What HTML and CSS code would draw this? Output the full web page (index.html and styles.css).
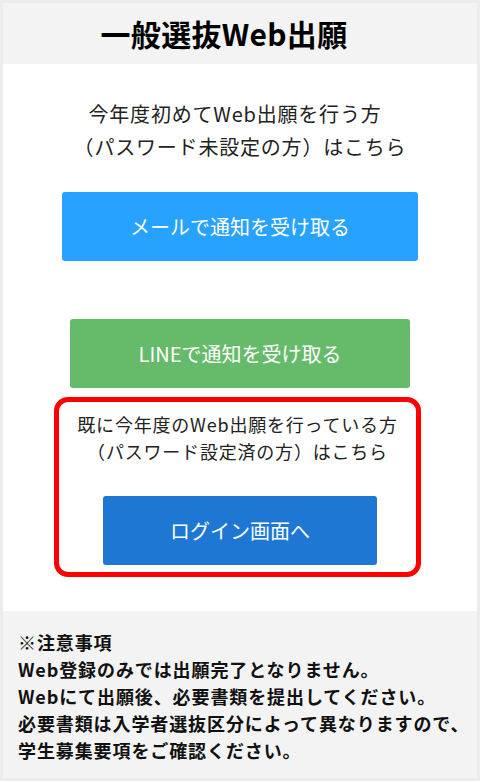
FILE: index.html
```html
<!DOCTYPE html>
<html lang="ja">
<head>
    <meta charset="UTF-8">
    <meta name="viewport" content="width=device-width, initial-scale=1.0">
    <title>一般選抜Web出願</title>
    <link rel="stylesheet" href="styles.css">
</head>
<body>
    <div class="page">
        <header class="page-header">
            <h1>一般選抜Web出願</h1>
        </header>

        <main class="content">
            <p class="lead"><span class="shift">今年度初めてWeb出願を行う方</span><br>（パスワード未設定の方）はこちら</p>

            <a href="#" class="btn btn-mail">メールで通知を受け取る</a>
            <a href="#" class="btn btn-line">LINEで通知を受け取る</a>

            <div class="login-box">
                <p class="lead-small">既に今年度のWeb出願を行っている方<br>（パスワード設定済の方）はこちら</p>
                <a href="#" class="btn btn-login">ログイン画面へ</a>
            </div>
        </main>

        <footer class="notice">
            <p>※注意事項<br>
            Web登録のみでは出願完了となりません。<br>
            Webにて出願後、必要書類を提出してください。<br>
            必要書類は入学者選抜区分によって異なりますので、<br>
            学生募集要項をご確認ください。</p>
        </footer>
    </div>
</body>
</html>
```

FILE: styles.css
```css
html, body {
    margin: 0;
    padding: 0;
}

body {
    font-family: 'Noto Sans CJK JP', 'Noto Sans', sans-serif;
    background: #ececec;
    color: #222;
    padding: 3px;
    box-sizing: border-box;
    height: 781px;
}

.page {
    background: #fff;
    height: 775px;
    display: flex;
    flex-direction: column;
}

.page-header {
    background: #f3f3f3;
    height: 61px;
}

.page-header h1 {
    margin: 0;
    font-size: 30px;
    font-weight: bold;
    line-height: 61px;
    text-align: center;
    color: #000;
    padding-right: 32px;
    letter-spacing: 0.3px;
}

.content {
    display: flex;
    flex-direction: column;
    align-items: center;
    padding-top: 33px;
}

.lead {
    margin: 0 0 29px;
    font-size: 20px;
    line-height: 33px;
    letter-spacing: 0.8px;
    text-align: center;
    color: #222;
}

.lead .shift {
    margin-right: 10px;
}

.btn {
    display: flex;
    justify-content: center;
    align-items: center;
    height: 69px;
    border-radius: 3px;
    color: #fff;
    font-size: 20px;
    text-decoration: none;
}

.btn-mail {
    width: 356px;
    background: #28a2ff;
}

.btn-line {
    width: 340px;
    margin-top: 58px;
    background: #66bb6a;
}

.login-box {
    box-sizing: border-box;
    width: 367px;
    height: 180px;
    margin-top: 9px;
    margin-right: 5px;
    border: 5px solid #ff0000;
    border-radius: 14px;
    padding-top: 9px;
    display: flex;
    flex-direction: column;
    align-items: center;
}

.lead-small {
    margin: 0 0 31px;
    font-size: 18px;
    line-height: 27px;
    letter-spacing: 0.8px;
    text-align: center;
    color: #222;
}

.btn-login {
    width: 274px;
    margin-left: 5px;
    background: #1e77d3;
}

.notice {
    margin-top: 34px;
    flex: 1;
    background: #f3f3f3;
    padding: 18px 0 0 15px;
}

.notice p {
    margin: 0;
    font-size: 18px;
    font-weight: bold;
    line-height: 27px;
    letter-spacing: 0.9px;
    white-space: nowrap;
    color: #111;
}
```
